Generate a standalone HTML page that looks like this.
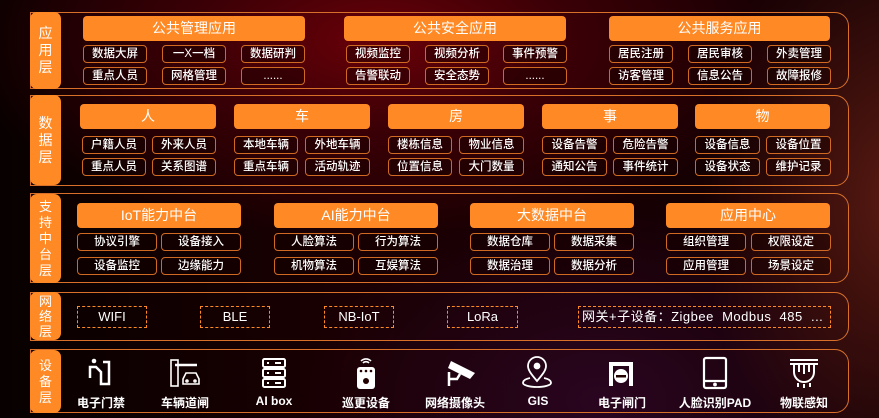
<!DOCTYPE html>
<html><head><meta charset="utf-8"><style>
*{margin:0;padding:0;box-sizing:border-box}
body{width:879px;height:418px;overflow:hidden;position:relative;font-family:"Liberation Sans","Noto Sans CJK SC",sans-serif;color:#fff;
background:
radial-gradient(ellipse 420px 200px at 380px 40px,#6a0008 0%,#3a0006 45%,rgba(0,0,0,0) 100%),
radial-gradient(ellipse 200px 300px at 900px 200px,#5a1a12 0%,rgba(0,0,0,0) 100%),
radial-gradient(ellipse 300px 200px at 600px 400px,#2a0520 0%,rgba(0,0,0,0) 100%),
linear-gradient(90deg,#080000 0%,#1a0002 40%,#120003 100%);}
.a{position:absolute}
.frame{position:absolute;left:30px;border:1px solid #d8702a;border-radius:0 14px 14px 0;}
.lab{position:absolute;left:30px;width:31px;background:#ff8a25;border-radius:7px;display:flex;flex-direction:column;align-items:center;justify-content:center;font-size:14px;line-height:17px;color:#fff}
.h{position:absolute;background:#ff8a25;border-radius:4px;height:25px;line-height:25px;text-align:center;font-size:14px;color:#fff}
.s{position:absolute;border:1px solid #d06a22;border-radius:4px;height:18px;line-height:16px;text-align:center;font-size:11.5px;color:#fff;background:rgba(20,0,0,.4);font-weight:500}
.d{position:absolute;border:1.5px dashed #ff8a25;height:22px;line-height:19px;text-align:center;font-size:13px;top:306px}
.ic{position:absolute;top:356px;width:40px;height:34px;margin-left:-20px}
.il{position:absolute;top:394px;font-size:12px;width:100px;margin-left:-50px;text-align:center;font-weight:bold}
</style></head><body>
<div class="frame" style="top:12px;width:819px;height:77px"></div>
<div class="lab" style="top:12px;height:77px">应<br>用<br>层</div>
<div class="h" style="left:83px;top:16px;width:222px">公共管理应用</div>
<div class="h" style="left:344px;top:16px;width:222px">公共安全应用</div>
<div class="h" style="left:609px;top:16px;width:221px">公共服务应用</div>
<div class="s" style="left:83px;top:45px;width:64px">数据大屏</div>
<div class="s" style="left:162px;top:45px;width:64px">一X一档</div>
<div class="s" style="left:241px;top:45px;width:64px">数据研判</div>
<div class="s" style="left:83px;top:67px;width:64px">重点人员</div>
<div class="s" style="left:162px;top:67px;width:64px">网格管理</div>
<div class="s" style="left:241px;top:67px;width:64px">......</div>
<div class="s" style="left:346px;top:45px;width:64px">视频监控</div>
<div class="s" style="left:425px;top:45px;width:64px">视频分析</div>
<div class="s" style="left:503px;top:45px;width:64px">事件预警</div>
<div class="s" style="left:346px;top:67px;width:64px">告警联动</div>
<div class="s" style="left:425px;top:67px;width:64px">安全态势</div>
<div class="s" style="left:503px;top:67px;width:64px">......</div>
<div class="s" style="left:609px;top:45px;width:64px">居民注册</div>
<div class="s" style="left:688px;top:45px;width:64px">居民审核</div>
<div class="s" style="left:767px;top:45px;width:64px">外卖管理</div>
<div class="s" style="left:609px;top:67px;width:64px">访客管理</div>
<div class="s" style="left:688px;top:67px;width:64px">信息公告</div>
<div class="s" style="left:767px;top:67px;width:64px">故障报修</div>
<div class="frame" style="top:95px;width:819px;height:91px"></div>
<div class="lab" style="top:95px;height:90px">数<br>据<br>层</div>
<div class="h" style="left:80px;top:104px;width:136px">人</div>
<div class="h" style="left:234px;top:104px;width:136px">车</div>
<div class="h" style="left:388px;top:104px;width:136px">房</div>
<div class="h" style="left:542px;top:104px;width:136px">事</div>
<div class="h" style="left:695px;top:104px;width:135px">物</div>
<div class="s" style="left:82px;top:136px;width:64px">户籍人员</div>
<div class="s" style="left:152px;top:136px;width:64px">外来人员</div>
<div class="s" style="left:82px;top:158px;width:64px">重点人员</div>
<div class="s" style="left:152px;top:158px;width:64px">关系图谱</div>
<div class="s" style="left:234px;top:136px;width:64px">本地车辆</div>
<div class="s" style="left:305px;top:136px;width:65px">外地车辆</div>
<div class="s" style="left:234px;top:158px;width:64px">重点车辆</div>
<div class="s" style="left:305px;top:158px;width:65px">活动轨迹</div>
<div class="s" style="left:388px;top:136px;width:64px">楼栋信息</div>
<div class="s" style="left:459px;top:136px;width:65px">物业信息</div>
<div class="s" style="left:388px;top:158px;width:64px">位置信息</div>
<div class="s" style="left:459px;top:158px;width:65px">大门数量</div>
<div class="s" style="left:542px;top:136px;width:65px">设备告警</div>
<div class="s" style="left:613px;top:136px;width:65px">危险告警</div>
<div class="s" style="left:542px;top:158px;width:65px">通知公告</div>
<div class="s" style="left:613px;top:158px;width:65px">事件统计</div>
<div class="s" style="left:695px;top:136px;width:65px">设备信息</div>
<div class="s" style="left:766px;top:136px;width:65px">设备位置</div>
<div class="s" style="left:695px;top:158px;width:65px">设备状态</div>
<div class="s" style="left:766px;top:158px;width:65px">维护记录</div>
<div class="frame" style="top:193px;width:819px;height:90px"></div>
<div class="lab" style="top:194px;height:89px;line-height:16px;font-size:13px">支<br>持<br>中<br>台<br>层</div>
<div class="h" style="left:77px;top:203px;width:164px">IoT能力中台</div>
<div class="h" style="left:274px;top:203px;width:164px">AI能力中台</div>
<div class="h" style="left:470px;top:203px;width:164px">大数据中台</div>
<div class="h" style="left:666px;top:203px;width:164px">应用中心</div>
<div class="s" style="left:77px;top:233px;width:80px">协议引擎</div>
<div class="s" style="left:161px;top:233px;width:80px">设备接入</div>
<div class="s" style="left:77px;top:257px;width:80px">设备监控</div>
<div class="s" style="left:161px;top:257px;width:80px">边缘能力</div>
<div class="s" style="left:274px;top:233px;width:80px">人脸算法</div>
<div class="s" style="left:358px;top:233px;width:80px">行为算法</div>
<div class="s" style="left:274px;top:257px;width:80px">机物算法</div>
<div class="s" style="left:358px;top:257px;width:80px">互娱算法</div>
<div class="s" style="left:470px;top:233px;width:80px">数据仓库</div>
<div class="s" style="left:554px;top:233px;width:80px">数据采集</div>
<div class="s" style="left:470px;top:257px;width:80px">数据治理</div>
<div class="s" style="left:554px;top:257px;width:80px">数据分析</div>
<div class="s" style="left:666px;top:233px;width:80px">组织管理</div>
<div class="s" style="left:751px;top:233px;width:80px">权限设定</div>
<div class="s" style="left:666px;top:257px;width:80px">应用管理</div>
<div class="s" style="left:751px;top:257px;width:80px">场景设定</div>
<div class="frame" style="top:292px;width:819px;height:49px"></div>
<div class="lab" style="top:292px;height:48px;line-height:15px;font-size:13px">网<br>络<br>层</div>
<div class="d" style="left:77px;width:70px">WIFI</div>
<div class="d" style="left:200px;width:70px">BLE</div>
<div class="d" style="left:324px;width:70px">NB-IoT</div>
<div class="d" style="left:447px;width:71px">LoRa</div>
<div class="d" style="left:578px;width:253px;text-align:left;padding-left:3px;letter-spacing:.5px">网关+子设备：Zigbee&nbsp; Modbus&nbsp; 485&nbsp; ...</div>
<div class="frame" style="top:349px;width:819px;height:64px"></div>
<div class="lab" style="top:350px;height:63px;line-height:16px;font-size:13px">设<br>备<br>层</div>
<svg class="ic" style="left:101px" viewBox="0 0 40 34" fill="none" stroke="#fff" stroke-width="2.5"><circle cx="13" cy="5" r="2.3" fill="#fff" stroke="none"/><path d="M9 22V11h6l5 5v12h8V6h-6"/></svg>
<svg class="ic" style="left:183px" viewBox="0 0 40 34" fill="none" stroke="#fff" stroke-width="1.6"><rect x="8" y="4" width="7" height="26"/><path d="M12 9h22" stroke-width="2.5"/><path d="M20 23l3-6h10l3 6v5H20z"/><circle cx="24" cy="25" r="1"/><circle cx="32" cy="25" r="1"/></svg>
<svg class="ic" style="left:274px" viewBox="0 0 40 34" fill="none" stroke="#fff" stroke-width="2"><rect x="9" y="3" width="22" height="8" rx="1.5"/><rect x="9" y="13" width="22" height="8" rx="1.5"/><rect x="9" y="23" width="22" height="8" rx="1.5"/><path d="M21 7h6M21 17h6M21 27h6M13 7h2M13 17h2M13 27h2"/></svg>
<svg class="ic" style="left:366px" viewBox="0 0 40 34"><path d="M15 5a7 7 0 0 1 10 0M17 7a4 4 0 0 1 6 0" stroke="#fff" stroke-width="1.6" fill="none"/><rect x="11" y="11" width="18" height="22" rx="3" fill="#fff"/><circle cx="15" cy="15" r="1.3" fill="#200"/><circle cx="20" cy="15" r="1.3" fill="#200"/><circle cx="25" cy="15" r="1.3" fill="#200"/><circle cx="20" cy="25" r="3" fill="#200"/></svg>
<svg class="ic" style="left:460px" viewBox="0 0 40 34"><path d="M11 5l24 12-5 6L8 12z" fill="#fff"/><path d="M9 16v14M9 23h8l3-5" stroke="#fff" stroke-width="2.5" fill="none"/></svg>
<svg class="ic" style="left:537px" viewBox="0 0 40 34" fill="none" stroke="#fff" stroke-width="1.8"><path d="M20 25c-6-7-9-11-9-15a9 9 0 0 1 18 0c0 4-3 8-9 15z"/><circle cx="20" cy="10" r="2.5" fill="#fff"/><path d="M13 22c-5 1-7 3-7 5 0 2 6 4 14 4s14-2 14-4c0-2-2-4-7-5"/></svg>
<svg class="ic" style="left:621px" viewBox="0 0 40 34"><rect x="8" y="6" width="4" height="24" fill="#fff"/><rect x="28" y="6" width="4" height="24" fill="#fff"/><rect x="8" y="6" width="24" height="4" fill="#fff"/><circle cx="20" cy="20" r="7" fill="#fff"/><rect x="15" y="19" width="10" height="2.5" fill="#200"/></svg>
<svg class="ic" style="left:715px" viewBox="0 0 40 34" fill="none" stroke="#fff" stroke-width="2.2"><rect x="9" y="2" width="22" height="30" rx="2"/><path d="M10 25h20"/><circle cx="20" cy="28.5" r="0.8" fill="#fff"/></svg>
<svg class="ic" style="left:804px" viewBox="0 0 40 34" fill="none" stroke="#fff" stroke-width="2"><path d="M6 4h28M6 8h28"/><path d="M10 8v8a10 10 0 0 0 20 0V8"/><path d="M15 9v7M20 9v9M25 9v7"/><path d="M14 27v4M20 28v4M26 27v4"/></svg>
<div class="il" style="left:101px">电子门禁</div>
<div class="il" style="left:185px">车辆道闸</div>
<div class="il" style="left:274px">AI box</div>
<div class="il" style="left:366px">巡更设备</div>
<div class="il" style="left:455px">网络摄像头</div>
<div class="il" style="left:538px">GIS</div>
<div class="il" style="left:622px">电子闸门</div>
<div class="il" style="left:715px">人脸识别PAD</div>
<div class="il" style="left:804px">物联感知</div>
</body></html>
